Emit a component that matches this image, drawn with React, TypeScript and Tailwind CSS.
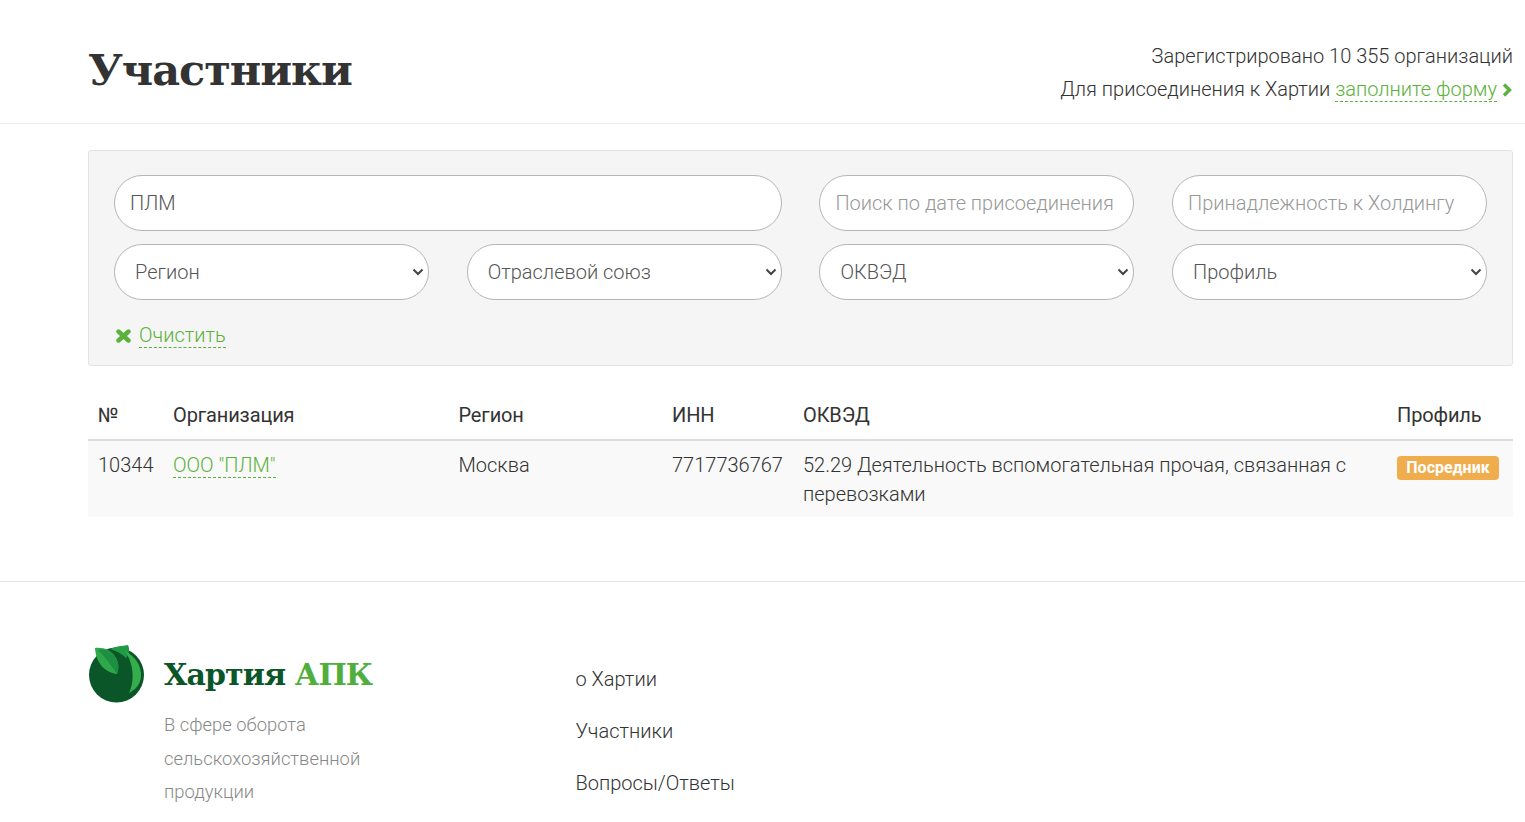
const roboto = "font-['Roboto',sans-serif]"

function LeafLogo() {
  return (
    <svg width="58" height="58" viewBox="0 0 58 58" className="shrink-0">
      <circle cx="28.5" cy="30" r="27.5" fill="#0a5628" />
      <path d="M22 4C28 1 34 1 40 0C42 4 41 10 38 13C34 9 29 6 22 4Z" fill="#1f9a45" />
      <path d="M37 6C47 11 54 21 53 32C52 40 47 45 41 48C46 38 47 21 37 6Z" fill="#35ad4c" />
      <path d="M7 3C15 2 24 5 28 13C31 18 31 24 29 29C20 28 8 21 7 3Z" fill="#2fa84a" />
      <path d="M10 5C17 12 23 20 29 29C31 24 31 18 28 13C24 6 16 3 10 5Z" fill="#1d8f41" />
    </svg>
  )
}

function Field({ placeholder, value }: { placeholder: string; value?: string }) {
  return (
    <input
      readOnly
      value={value}
      placeholder={placeholder}
      className="h-14 w-full rounded-[28px] border border-[#b5b5b5] bg-white px-[15px] text-[20px] font-light text-[#555] outline-none placeholder:text-[#999]"
    />
  )
}

function Picker({ label }: { label: string }) {
  return (
    <div className="relative">
      <select className="h-14 w-full appearance-none rounded-[28px] border border-[#b5b5b5] bg-white pl-5 pr-6 text-[20px] font-light text-[#555] outline-none">
        <option>{label}</option>
      </select>
      <svg
        width="12"
        height="8"
        viewBox="0 0 12 8"
        className="pointer-events-none absolute right-[5px] top-[24px]"
      >
        <path d="M1.5 1.5L6 6L10.5 1.5" stroke="#444" strokeWidth="2" fill="none" />
      </svg>
    </div>
  )
}

export default function App() {
  return (
    <div className={`h-[822px] overflow-hidden bg-white text-[#333] font-light ${roboto}`}>
      <header className="flex h-[124px] items-start justify-between border-b border-[#ececec] pl-[88px] pr-3">
        <h1 className="mt-[40px] font-['DejaVu_Serif',serif] text-[43px] font-bold leading-[60px] tracking-[-1.05px] text-[#333]">
          Участники
        </h1>
        <div className="mt-[40px] text-right text-[20px] leading-[33px]">
          <div>Зарегистрировано 10 355 организаций</div>
          <div className="flex items-center justify-end">
            Для присоединения к Хартии&nbsp;
            <a className="border-b border-dashed border-[#5bb13c] leading-[23px] text-[#5bb13c]">заполните форму</a>
            <svg width="10" height="14" viewBox="0 0 10 14" className="ml-[5px] mr-[1px]">
              <path d="M2 1.5L7.5 7L2 12.5" stroke="#5bb13c" strokeWidth="3.4" fill="none" />
            </svg>
          </div>
        </div>
      </header>

      <main className="ml-[88px] mr-3">
        <section className="mt-[26px] h-[216px] rounded-[3px] border border-[#e3e3e3] bg-[#f5f5f5] px-[25px] pt-[24px]">
          <div className="grid grid-cols-[315px_315px_315px_315px] gap-x-[37.7px] gap-y-[13px]">
            <div className="col-span-2">
              <Field placeholder="" value="ПЛМ" />
            </div>
            <Field placeholder="Поиск по дате присоединения" />
            <Field placeholder="Принадлежность к Холдингу" />
            <Picker label="Регион" />
            <Picker label="Отраслевой союз" />
            <Picker label="ОКВЭД" />
            <Picker label="Профиль" />
          </div>
          <div className="mt-[23px] ml-[2px] flex items-center gap-2 text-[20px] leading-[24px]">
            <svg width="15" height="14" viewBox="0 0 15 14">
              <path d="M2.5 2.5L12.5 11.5M12.5 2.5L2.5 11.5" stroke="#5bb13c" strokeWidth="4.4" strokeLinecap="round" />
            </svg>
            <a className="border-b border-dashed border-[#5bb13c] text-[#5bb13c]">Очистить</a>
          </div>
        </section>

        <table className="mt-[24px] w-full table-fixed border-collapse text-left text-[20px]">
          <colgroup>
            <col className="w-[75px]" />
            <col className="w-[285.5px]" />
            <col className="w-[213.5px]" />
            <col className="w-[131px]" />
            <col className="w-[594px]" />
            <col />
          </colgroup>
          <thead>
            <tr className="border-b-2 border-[#ddd]">
              <th className="h-[50px] px-[10px] font-normal tracking-[-0.12px]">№</th>
              <th className="px-[10px] font-normal tracking-[-0.12px]">Организация</th>
              <th className="px-[10px] font-normal tracking-[-0.12px]">Регион</th>
              <th className="px-[10px] font-normal tracking-[-0.12px]">ИНН</th>
              <th className="px-[10px] font-normal tracking-[-0.12px]">ОКВЭД</th>
              <th className="px-[10px] font-normal tracking-[-0.12px]">Профиль</th>
            </tr>
          </thead>
          <tbody>
            <tr className="bg-[#f9f9f9] align-top leading-[29px]">
              <td className="px-[10px] pb-[8px] pt-[10px]">10344</td>
              <td className="px-[10px] pb-[8px] pt-[10px]">
                <a className="border-b border-dashed border-[#5bb13c] text-[#5bb13c]">ООО "ПЛМ"</a>
              </td>
              <td className="px-[10px] pb-[8px] pt-[10px]">Москва</td>
              <td className="px-[10px] pb-[8px] pt-[10px]">7717736767</td>
              <td className="px-[10px] pb-[8px] pt-[10px]">
                52.29 Деятельность вспомогательная прочая, связанная с перевозками
              </td>
              <td className="px-[10px] pb-[8px] pt-[15px]">
                <span className="block h-6 w-[102px] rounded-[4px] bg-[#f0ad4e] text-center text-[16px] font-bold leading-[23px] text-white">
                  Посредник
                </span>
              </td>
            </tr>
          </tbody>
        </table>
      </main>

      <footer className="mt-[64px] flex border-t border-[#e5e5e5] pl-[88px] pt-[63px]">
        <div className="w-[487.5px]">
          <div className="flex items-center gap-[18px]">
            <LeafLogo />
            <div className="mt-[2px] font-['DejaVu_Serif',serif] text-[30px] font-bold leading-[40px] tracking-[-0.9px] text-[#0a5628]">
              Хартия <span className="text-[#4fae3c]">АПК</span>
            </div>
          </div>
          <p className="ml-[76px] mt-[5px] w-[220px] text-[18.4px] leading-[33.5px] text-[#888]">
            В сфере оборота сельскохозяйственной продукции
          </p>
        </div>
        <nav className="mt-[19px] flex flex-col gap-[22px] text-[20px] leading-[30px]">
          <a>о Хартии</a>
          <a>Участники</a>
          <a>Вопросы/Ответы</a>
        </nav>
      </footer>
    </div>
  )
}
